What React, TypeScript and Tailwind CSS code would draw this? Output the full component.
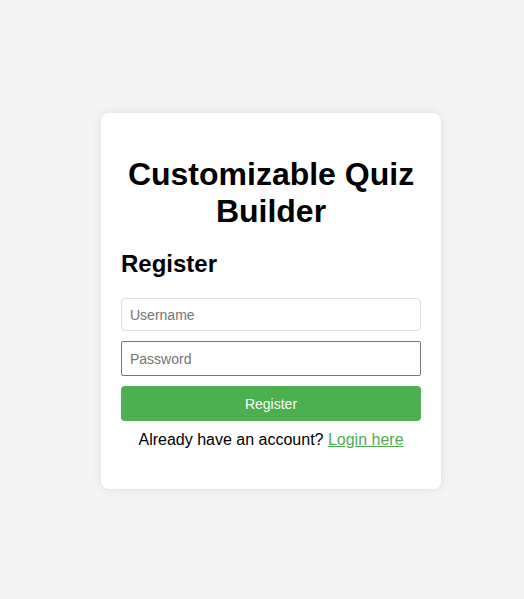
export default function App() {
  return (
    <div className="min-h-screen flex items-center justify-center pl-[18px] pt-[3px] bg-[#f4f4f4] font-['Liberation_Sans',Arial,sans-serif]">
      <div className="w-[340px] bg-white rounded-lg p-5 shadow-[0_0_10px_rgba(0,0,0,0.1)]">
        <h1 className="text-[32px] leading-[37px] font-bold text-center text-black mt-[23px]">
          Customizable Quiz Builder
        </h1>
        <h2 className="text-2xl leading-[28px] font-bold text-black mt-5 mb-5">Register</h2>
        <form className="flex flex-col" onSubmit={(e) => e.preventDefault()}>
          <input
            type="text"
            placeholder="Username"
            className="h-[33px] px-2 text-sm border border-[#ddd] rounded mb-[10px] placeholder:text-[#757575] outline-none"
          />
          <input
            type="password"
            placeholder="Password"
            className="h-[35px] px-2 text-sm border border-[#767676] rounded-[2px] mb-[10px] placeholder:text-[#757575] outline-none"
          />
          <button
            type="submit"
            className="h-[35px] bg-[#4caf50] text-white text-sm rounded"
          >
            Register
          </button>
        </form>
        <p className="text-center text-base text-black mt-[7px] mb-[17px]">
          Already have an account?{" "}
          <a href="#" className="text-[#4caf50] underline">
            Login here
          </a>
        </p>
      </div>
    </div>
  );
}
